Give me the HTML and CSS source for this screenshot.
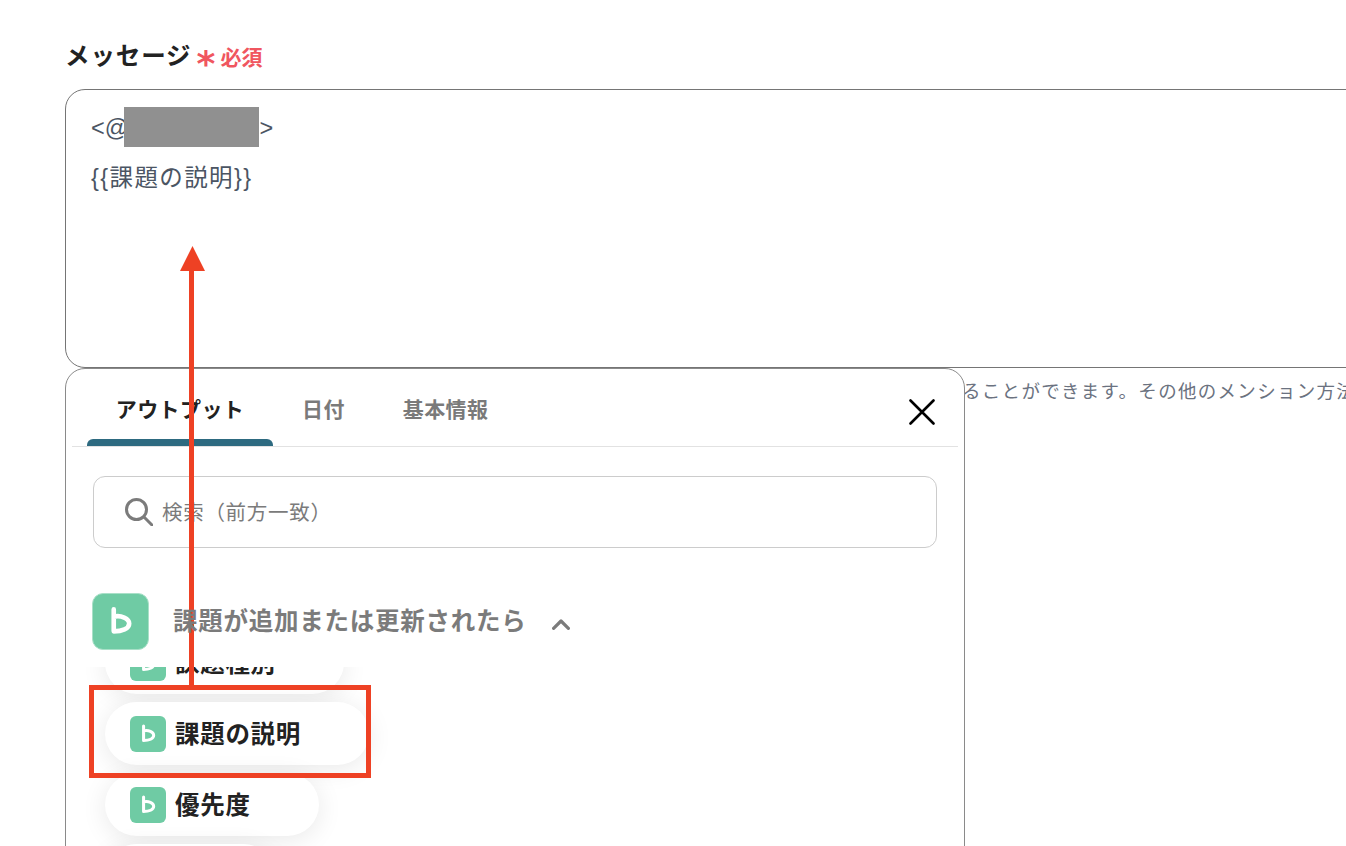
FILE: index.html
```html
<!DOCTYPE html>
<html lang="ja">
<head>
<meta charset="utf-8">
<title>メッセージ</title>
<link rel="stylesheet" href="styles.css">
</head>
<body>
<svg class="defs" width="0" height="0" aria-hidden="true">
  <symbol id="logo" viewBox="0 0 57 57">
    <path d="M21.5 16V38.7C30 38.7 37.5 36 37.5 30.5C37.5 25.5 29 21.5 21.5 23.5" fill="none" stroke="#fff" stroke-width="4.8" stroke-linecap="round" stroke-linejoin="round"/>
  </symbol>
</svg>
<main class="page">
  <div class="label-row">
    <span class="label">メッセージ</span>
    <span class="asterisk">*</span>
    <span class="required">必須</span>
  </div>
  <div class="editor">
    <p class="line line-first">&lt;@<span class="redact"></span>&gt;</p>
    <p class="line">{{課題の説明}}</p>
  </div>
  <p class="hint">ることができます。その他のメンション方法</p>

  <section class="popover">
    <div class="tabs">
      <div class="tab tab-active">アウトプット</div>
      <div class="tab">日付</div>
      <div class="tab">基本情報</div>
      <svg class="close" viewBox="0 0 26 26" width="26" height="26"><path d="M1.5 1.5L24.5 24.5M24.5 1.5L1.5 24.5" stroke="#000" stroke-width="2.6" stroke-linecap="round"/></svg>
    </div>
    <div class="search">
      <svg class="search-icon" viewBox="0 0 28 28" width="28" height="28"><circle cx="11.5" cy="11.5" r="10" fill="none" stroke="#7b7b7b" stroke-width="3"/><path d="M19 19L27 27" stroke="#7b7b7b" stroke-width="3" stroke-linecap="round"/></svg>
      <span>検索（前方一致）</span>
    </div>
    <div class="group-head">
      <svg class="head-logo" width="57" height="57"><use href="#logo"/></svg>
      <span class="group-title">課題が追加または更新されたら</span>
      <svg class="chevron" viewBox="0 0 18 12" width="18" height="12"><path d="M1.6 10.4L9 3L16.4 10.4" fill="none" stroke="#7b7b7b" stroke-width="3.2" stroke-linecap="round" stroke-linejoin="round"/></svg>
    </div>
    <div class="list">
      <div class="pill"><svg class="pill-logo" width="36" height="36"><use href="#logo"/></svg><span class="pill-text">課題種別</span></div>
      <div class="pill"><svg class="pill-logo" width="36" height="36"><use href="#logo"/></svg><span class="pill-text">課題の説明</span></div>
      <div class="pill"><svg class="pill-logo" width="36" height="36"><use href="#logo"/></svg><span class="pill-text">優先度</span></div>
      <div class="pill pill-empty"></div>
    </div>
  </section>

  <div class="arrow-line"></div>
  <div class="arrow-head"></div>
  <div class="highlight"></div>
</main>
</body>
</html>
```
FILE: styles.css
```css
* { box-sizing: border-box; }
html, body { margin: 0; height: 846px; overflow: hidden; background: #fff; }
body { font-family: "Liberation Sans", "Noto Sans CJK JP", sans-serif; }
.defs { position: absolute; }
.page { position: relative; height: 846px; padding: 34px 0 0 65px; overflow: hidden; }

.label-row { display: flex; align-items: center; height: 40px; }
.label { font-size: 24.5px; font-weight: 700; letter-spacing: 0.9px; color: #222; }
.asterisk { margin-left: 5px; font-size: 36px; font-weight: 700; line-height: 40px; height: 40px; color: #f0565f; font-family: "DejaVu Sans", sans-serif; padding-top: 10px; width: 22px; }
.required { margin-left: 2px; font-size: 21px; font-weight: 700; color: #f0565f; padding-top: 3px; }

.editor { width: 1400px; height: 279px; margin-top: 15px; padding: 12px 0 0 25px; border: 1px solid #757575; border-radius: 20px; color: #4b5563; font-size: 23.5px; letter-spacing: 1.4px; }
.line { margin: 0; height: 50px; line-height: 50px; white-space: nowrap; }
.line-first { display: flex; align-items: center; height: 50px; letter-spacing: 0; padding-top: 2px; }
.redact { display: inline-block; width: 135px; height: 40px; margin: -2px 1px 0 -5px; background: #909090; }
.line + .line { margin-top: 1px; }

.hint { margin: 10px 0 0 897px; font-size: 18.5px; letter-spacing: 1.3px; line-height: 28px; color: #6b7280; white-space: nowrap; }

.popover { position: absolute; left: 65px; top: 368px; width: 900px; height: 520px; padding: 0 6px; background: #fff; border: 1px solid #8a8a8a; border-radius: 20px; }
.tabs { display: flex; align-items: flex-start; height: 78px; border-bottom: 1px solid #e2e2e2; padding-left: 15px; position: relative; }
.tab { position: relative; width: 186px; height: 77px; padding-top: 25px; text-align: center; font-size: 21px; line-height: 32px; font-weight: 700; letter-spacing: 0.4px; color: #7a7a7a; }
.tab + .tab { width: auto; padding-left: 29px; padding-right: 29px; }
.tab-active { color: #222; }
.tab-active::after { content: ""; position: absolute; left: 0; right: 0; bottom: 0; height: 7px; background: #2d6a80; border-radius: 6px 6px 0 0; }
.close { position: absolute; right: 23px; top: 30px; }

.search { display: flex; align-items: center; gap: 9px; height: 72px; margin: 29px 21px 0; padding-left: 31px; border: 1px solid #cccccc; border-radius: 12px; font-size: 20.5px; letter-spacing: 0.7px; color: #7b7b7b; }
.search span { margin-bottom: 2px; }

.group-head { display: flex; align-items: center; height: 57px; margin: 45px 0 0 20px; position: relative; z-index: 1; }
.head-logo { background: #6fcba4; border-radius: 11px; border: 1px solid #a9e0c8; flex: none; }
.group-title { margin: 0 0 4px 24px; font-size: 24.5px; font-weight: 700; letter-spacing: 0.75px; color: #7b7b7b; }
.chevron { margin: 4px 0 0 25px; }

.list { height: 190px; margin: 17px -6px 0 -7px; padding: 0 0 0 40px; overflow: hidden; display: flex; flex-direction: column; align-items: flex-start; gap: 8px; }
.pill { flex: none; display: flex; align-items: center; height: 63px; padding: 0 68px 0 25px; background: #fff; border-radius: 32px; box-shadow: 0 4px 26px rgba(0, 0, 0, 0.09); font-size: 24.5px; font-weight: 700; letter-spacing: 0.7px; color: #222; }
.pill:first-child { margin-top: -36px; }
.pill-text { margin-bottom: 2px; }
.pill-empty { width: 170px; }
.pill-logo { flex: none; margin-right: 9px; background: #6fcba4; border-radius: 6px; }

.arrow-line { position: absolute; left: 189px; top: 268px; width: 5px; height: 419px; background: #ee4124; }
.arrow-head { position: absolute; left: 180px; top: 246px; width: 25px; height: 25px; background: #ee4124; clip-path: polygon(50% 0, 100% 100%, 0 100%); }
.highlight { position: absolute; left: 89px; top: 685px; width: 282px; height: 93px; border: 5px solid #ee4124; }
```
